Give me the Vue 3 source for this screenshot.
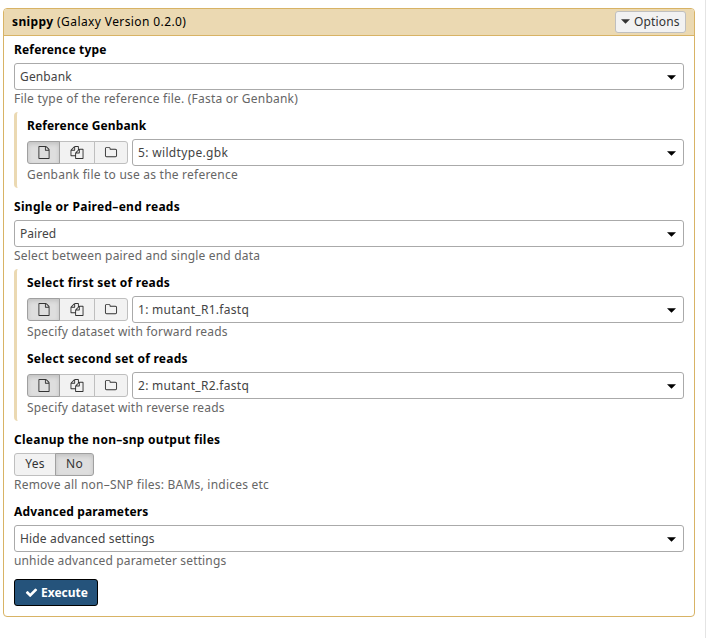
<script setup>
import { ref } from 'vue'

const sourceIcons = [
  'M1596 380q28 28 48 76t20 88v1152q0 40-28 68t-68 28h-1344q-40 0-68-28t-28-68v-1600q0-40 28-68t68-28h896q40 0 88 20t76 48zm-444-244v376h376q-10-29-22-41l-313-313q-12-12-41-22zm384 1528v-1024h-416q-40 0-68-28t-28-68v-416h-768v1536h1280z',
  'M1696 384q40 0 68 28t28 68v1216q0 40-28 68t-68 28h-960q-40 0-68-28t-28-68v-288h-544q-40 0-68-28t-28-68v-672q0-40 20-88t48-76l408-408q28-28 76-48t88-20h416q40 0 68 28t28 68v328q68-40 128-40h416zm-544 213l-299 299h299v-299zm-640-384l-299 299h299v-299zm196 647l316-316v-416h-384v416q0 40-28 68t-68 28h-416v640h512v-256q0-40 20-88t48-76zm956 804v-1152h-384v416q0 40-28 68t-68 28h-416v640h896z',
  'M1600 1312v-704q0-40-28-68t-68-28h-704q-40 0-68-28t-28-68v-64q0-40-28-68t-68-28h-320q-40 0-68 28t-28 68v960q0 40 28 68t68 28h1216q40 0 68-28t28-68zm128-704v704q0 92-66 158t-158 66h-1216q-92 0-158-66t-66-158v-960q0-92 66-158t158-66h320q92 0 158 66t66 158v32h672q92 0 158 66t66 158z',
]

const cleanup = ref('No')

// tracking: letter spacing in px for the label, the value and the help text
const groups = [
  { fields: [{ label: 'Reference type', value: 'Genbank', help: 'File type of the reference file. (Fasta or Genbank)', tracking: [0.16, 0.14, 0.22] }] },
  { nested: true, fields: [{ label: 'Reference Genbank', value: '5: wildtype.gbk', help: 'Genbank file to use as the reference', data: true, tracking: [0.13, 0.34, 0.22] }] },
  { fields: [{ label: 'Single or Paired–end reads', value: 'Paired', help: 'Select between paired and single end data', tracking: [0.3, 0.05, 0.18] }] },
  {
    nested: true,
    fields: [
      { label: 'Select first set of reads', value: '1: mutant_R1.fastq', help: 'Specify dataset with forward reads', data: true, tracking: [0.25, 0.29, 0.18] },
      { label: 'Select second set of reads', value: '2: mutant_R2.fastq', help: 'Specify dataset with reverse reads', data: true, tracking: [0.25, 0.29, 0.18] },
    ],
  },
  {
    fields: [
      { label: 'Cleanup the non–snp output files', toggle: true, help: 'Remove all non–SNP files: BAMs, indices etc', tracking: [0.26, 0, 0.22] },
      { label: 'Advanced parameters', value: 'Hide advanced settings', help: 'unhide advanced parameter settings', tracking: [0.16, 0.15, 0.14] },
    ],
  },
]

const spacing = (field, i) => ({ letterSpacing: `${field.tracking[i]}px` })
</script>

<template>
  <div class="page">
    <section class="panel">
      <header class="head">
        <div class="title"><b>snippy</b> (Galaxy Version 0.2.0)</div>
        <button class="options"><svg class="caret" viewBox="0 0 10 5"><path d="M0 0h10L5 5z" /></svg><span>Options</span></button>
      </header>
      <div class="body">
        <div v-for="(group, g) in groups" :key="g" class="group" :class="{ nested: group.nested }">
          <div v-for="field in group.fields" :key="field.label" class="field">
            <div class="label"><span :style="spacing(field, 0)">{{ field.label }}</span></div>
            <div v-if="field.toggle" class="buttons">
              <button v-for="o in ['Yes', 'No']" :key="o" class="btn choice" :class="[o.toLowerCase(), { active: cleanup === o }]" @click="cleanup = o">{{ o }}</button>
            </div>
            <div v-else class="row">
              <div v-if="field.data" class="buttons sources">
                <button v-for="(icon, i) in sourceIcons" :key="i" class="btn source" :class="{ active: i === 0 }">
                  <svg class="icon" viewBox="0 0 1792 1792"><path :d="icon" /></svg>
                </button>
              </div>
              <div class="select">
                <span :style="spacing(field, 1)">{{ field.value }}</span>
                <svg class="arrow" viewBox="0 0 10 5"><path d="M0 0h10L5 5z" /></svg>
              </div>
            </div>
            <div class="help"><span :style="spacing(field, 2)">{{ field.help }}</span></div>
          </div>
        </div>
        <button class="execute">
          <svg class="check" viewBox="0 0 1792 1792"><path d="M1671 566q0 40-28 68l-724 724-136 136q-28 28-68 28t-68-28l-136-136-362-362q-28-28-28-68t28-68l136-136q28-28 68-28t68 28l294 295 656-657q28-28 68-28t68 28l136 136q28 28 28 68z" /></svg>
          <span>Execute</span>
        </button>
      </div>
    </section>
  </div>
</template>

<style>
body {
  margin: 0;
  background: #fff;
}
</style>

<style scoped>
.page {
  box-sizing: border-box;
  height: 638px;
  padding: 8px 10px 0 3px;
  border-right: 1px solid #e4e4e4;
  font-family: 'Lucida Grande', 'Noto Sans', sans-serif;
  font-size: 12px;
  color: #000;
}
.page * {
  box-sizing: border-box;
}
button {
  margin: 0;
  font: inherit;
  letter-spacing: inherit;
}
.panel {
  height: 609px;
  border: 1px solid #d8b365;
  border-radius: 4px;
}
.head {
  display: flex;
  align-items: center;
  justify-content: space-between;
  height: 27px;
  padding: 0 8px;
  background: #ebd9b2;
  border-bottom: 1px solid #d8b365;
  border-radius: 3px 3px 0 0;
}
.title {
  line-height: 26px;
  letter-spacing: 0.4px;
}
.options {
  display: flex;
  align-items: center;
  gap: 4px;
  width: 71px;
  height: 22px;
  padding: 0 0 1px 5px;
  background: #f2f2f2;
  border: 1px solid #bfbfbf;
  border-radius: 3px;
  color: #333;
  letter-spacing: 0.15px;
}
.caret {
  width: 9px;
  height: 5px;
  fill: #333;
}
.body {
  padding: 4px 10px 0;
}
.field + .field {
  margin-top: 10px;
}
.nested {
  margin: 6px 0 9px;
  padding: 4px 0 6px 10px;
  border-left: 3px solid #ebd9b2;
  border-radius: 4px 0 0 4px;
}
.label {
  height: 18px;
  margin-bottom: 5px;
  font-weight: 700;
  line-height: 20px;
}
.row {
  display: flex;
  align-items: center;
  gap: 4px;
}
.select {
  display: flex;
  flex: 1;
  align-items: center;
  justify-content: space-between;
  height: 27px;
  padding: 0 7px 0 5px;
  border: 1px solid #aaa;
  border-radius: 3px;
  color: #444;
}
.arrow {
  width: 9px;
  height: 5px;
  margin-top: 2px;
  fill: #000;
}
.help {
  height: 16px;
  line-height: 18px;
  color: #666;
}
.buttons {
  display: flex;
  height: 23px;
}
.btn {
  display: flex;
  align-items: center;
  justify-content: center;
  height: 23px;
  padding: 0;
  background: #f2f2f2;
  border: 1px solid #bfbfbf;
  color: #333;
}
.btn + .btn {
  margin-left: -1px;
}
.btn:first-child {
  border-radius: 3px 0 0 3px;
}
.btn:last-child {
  border-radius: 0 3px 3px 0;
}
.btn.active {
  z-index: 1;
  background: #dedede;
  border-color: #a0a0a0;
  box-shadow: inset 0 2px 4px rgba(0, 0, 0, 0.13);
}
.source {
  width: 34px;
}
.source:nth-child(2) {
  width: 36px;
}
.sources {
  width: 101px;
}
.source:first-child {
  width: 33px;
}
.icon {
  width: 14px;
  height: 13px;
  fill: #333;
}
.choice {
  padding-bottom: 2px;
  letter-spacing: 0.2px;
}
.choice.yes {
  width: 42px;
}
.choice.no {
  width: 39px;
}
.execute {
  display: flex;
  align-items: center;
  gap: 3px;
  width: 84px;
  height: 27px;
  margin-top: 11px;
  padding: 0 10px;
  background: #25537b;
  border: 1px solid #000;
  border-radius: 3px;
  color: #fff;
  font-weight: 700;
}
.check {
  flex: none;
  width: 13px;
  height: 13px;
  fill: #fff;
}
</style>
